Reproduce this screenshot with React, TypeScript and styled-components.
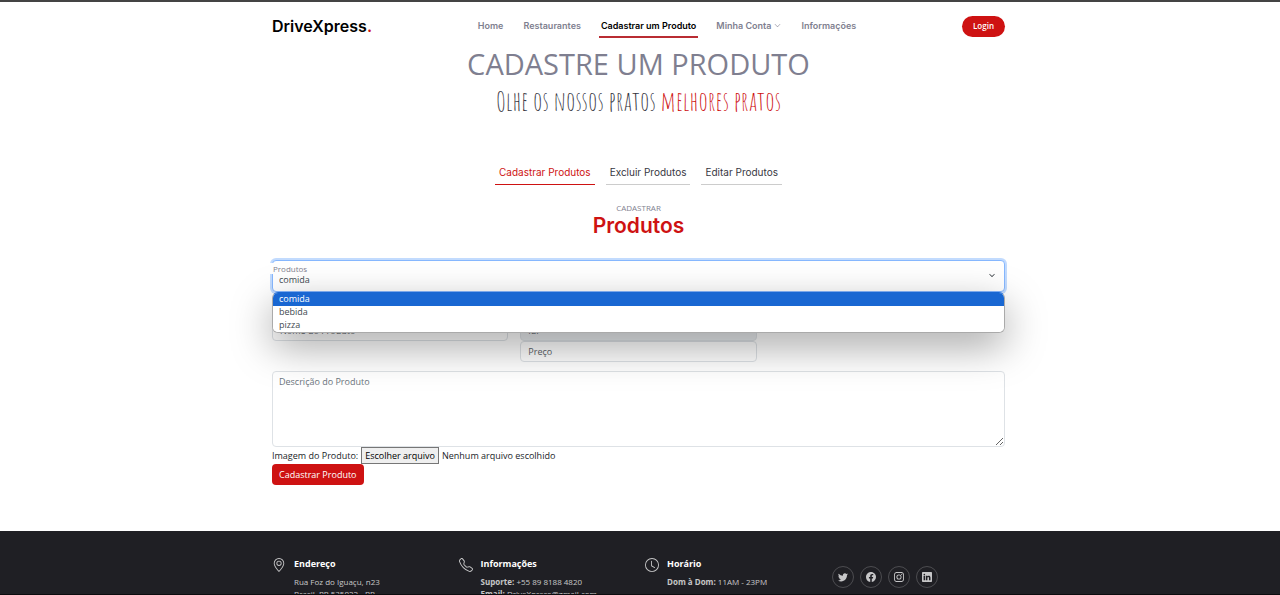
import React from "react";
import styled, { createGlobalStyle } from "styled-components";
import {
  BsChevronDown,
  BsClock,
  BsFacebook,
  BsGeoAlt,
  BsInstagram,
  BsLinkedin,
  BsTelephone,
  BsTwitter,
} from "react-icons/bs";

const RED = "#ce1212";
const GREY = "#7f7f90";

const GlobalStyle = createGlobalStyle`
  *, *::before, *::after { box-sizing: border-box; }
  html { overflow: hidden; }
  body {
    margin: 0;
    background: #fff;
    color: #212529;
    font-family: "Open Sans", sans-serif;
    font-size: 9px;
    line-height: 16px;
  }
  h1, h2, h3, p, ul { margin: 0; padding: 0; font-weight: 400; }
  a { color: inherit; text-decoration: none; }
  input, select, textarea, button { font: inherit; }
`;

const Page = styled.div`
  height: 100vh;
  overflow: hidden;
  border-top: 2px solid #444;
  border-bottom: 1px solid #0c0c0e;
`;

const Container = styled.div`
  width: calc(100% - 24px);
  max-width: 733px;
  margin: 0 auto;
`;

const Content = styled.div`
  padding-right: 3px;
`;

const Header = styled(Container).attrs({ as: "header" })`
  display: flex;
  align-items: center;
  justify-content: space-between;
  height: 48px;
`;

const Logo = styled.a`
  color: #000;
  font: 600 16px/24px Inter, sans-serif;
  span { color: ${RED}; }
`;

const Nav = styled.nav`
  display: flex;
  gap: 16px;
  font: 600 9px/14px Inter, sans-serif;
`;

const NavLink = styled.a<{ $active?: boolean }>`
  display: flex;
  align-items: center;
  gap: 3px;
  padding: 4px 2px 3px;
  color: ${(p) => (p.$active ? "#000" : GREY)};
  border-bottom: 2px solid ${(p) => (p.$active ? "#b92c33" : "transparent")};
  svg { width: 7px; height: 7px; }
`;

const Login = styled.button`
  height: 21px;
  padding: 0 11px;
  border: 0;
  border-radius: 11px;
  background: ${RED};
  color: #fff;
  font: 600 8px/12px "Open Sans", sans-serif;
`;

const Intro = styled.section`
  text-align: center;
`;

const Title = styled.h1`
  color: ${GREY};
  font-size: 29px;
  line-height: 28px;
`;

const Tagline = styled.p`
  padding-top: 4px;
  color: #37373f;
  font-family: "Amatic SC", "Liberation Sans", sans-serif;
  font-size: 27px;
  line-height: 38px;
  span { color: ${RED}; }
`;

const Tabs = styled.div`
  display: flex;
  justify-content: center;
  gap: 11px;
  padding-top: 40px;
`;

const Tab = styled.button<{ $active?: boolean }>`
  height: 25px;
  padding: 0 4px;
  border: 0;
  border-bottom: 1px solid ${(p) => (p.$active ? RED : "#ccc")};
  background: none;
  color: ${(p) => (p.$active ? RED : "#37373f")};
  font: 400 10px/24px Inter, sans-serif;
`;

const SectionHead = styled.header`
  padding: 17px 0 22px;
  text-align: center;
  p { color: ${GREY}; font-size: 8px; line-height: 12px; }
  h2 { color: ${RED}; font: 600 21px/24px Inter, sans-serif; }
`;

const Form = styled.form`
  display: flex;
  flex-direction: column;
`;

const SelectField = styled.div`
  position: relative;
  margin-bottom: 28px;
`;

const SelectLabel = styled.label`
  position: absolute;
  top: 3px;
  left: -2px;
  padding: 0 2px 0 3px;
  background: #fff;
  color: ${GREY};
  font-size: 8px;
  line-height: 11px;
`;

const Select = styled.select`
  display: block;
  width: 100%;
  height: 32px;
  padding: 8px 24px 0 6px;
  border: 1px solid #86b7fe;
  border-radius: 4px;
  outline: 0;
  box-shadow: 0 0 0 2px #c2dbfe;
  appearance: none;
  background: #fff;
  color: #414a51;
`;

const SelectArrow = styled(BsChevronDown)`
  position: absolute;
  top: 12px;
  right: 10px;
  width: 6px;
  height: 7px;
  stroke: #343a40;
  stroke-width: 1;
  pointer-events: none;
`;

const Options = styled.ul`
  position: absolute;
  z-index: 1;
  top: 100%;
  left: 0;
  right: 0;
  overflow: hidden;
  border: 1px solid #aaa;
  border-top-color: #1967d2;
  border-radius: 6px;
  background: #fff;
  list-style: none;
`;

const PopupShadow = styled.div`
  position: absolute;
  z-index: 1;
  top: 100%;
  left: 0;
  right: 0;
  height: 40px;
  border-radius: 6px;
  box-shadow: 0 14px 40px rgba(0, 0, 0, 0.36);
`;

const Option = styled.li<{ $selected?: boolean }>`
  height: 13px;
  padding: 0 6px;
  line-height: 12px;
  background: ${(p) => (p.$selected ? "#1967d2" : "#fff")};
  color: ${(p) => (p.$selected ? "#fff" : "#414a51")};
`;

const Fields = styled.div`
  display: grid;
  grid-template-columns: repeat(3, 1fr);
  gap: 0 12px;
  align-items: start;
  margin-bottom: 9px;
`;

const Input = styled.input`
  display: block;
  width: 100%;
  height: 21px;
  padding: 0 7px;
  border: 1px solid #dee2e6;
  border-radius: 4px;
  background: #fff;
  &::placeholder { color: #5c6369; opacity: 1; }
  &:disabled { background: #e9ecef; }
`;

const TextArea = styled.textarea`
  display: block;
  width: 100%;
  height: 76px;
  padding: 2px 6px;
  border: 1px solid #dee2e6;
  border-radius: 4px;
  background: #fff;
  &::placeholder { color: #6c757d; opacity: 1; }
`;

const FileRow = styled.div`
  display: flex;
  align-items: center;
  gap: 3px;
  height: 17px;
`;

const HiddenFile = styled.input`
  position: absolute;
  width: 1px;
  height: 1px;
  opacity: 0;
`;

const FileButton = styled.label`
  padding: 0 3px;
  border: 1px solid #767676;
  background: #efefef;
  color: #000;
  line-height: 15px;
`;

const Submit = styled.button`
  align-self: flex-start;
  height: 21px;
  padding: 0 7px;
  border: 0;
  border-radius: 4px;
  background: ${RED};
  color: #fff;
`;

const Footer = styled.footer`
  margin-top: 46px;
  padding: 25px 3px 30px 0;
  background: #1f1f24;
  color: rgba(255, 255, 255, 0.75);
  font-size: 8px;
  line-height: 12px;
`;

const FooterGrid = styled(Container)`
  display: grid;
  grid-template-columns: repeat(4, 1fr);
  gap: 13px;
`;

const Info = styled.section`
  display: flex;
  gap: 8px;
  > svg { flex: none; width: 14px; height: 14px; margin-top: 2px; }
  h3 { margin-bottom: 4px; color: #fff; font-size: 9px; font-weight: 700; line-height: 16px; }
  p { white-space: nowrap; }
`;

const Socials = styled.div`
  display: flex;
  gap: 6px;
  padding-top: 10px;
`;

const Social = styled.a`
  display: flex;
  align-items: center;
  justify-content: center;
  width: 22px;
  height: 22px;
  border: 1px solid rgba(255, 255, 255, 0.2);
  border-radius: 50%;
  svg { width: 10px; height: 10px; }
`;

export default function App() {
  return (
    <Page>
      <GlobalStyle />
      <Content>
        <Header>
          <Logo href="#">DriveXpress<span>.</span></Logo>
          <Nav>
            <NavLink href="#">Home</NavLink>
            <NavLink href="#">Restaurantes</NavLink>
            <NavLink href="#" $active>Cadastrar um Produto</NavLink>
            <NavLink href="#">Minha Conta <BsChevronDown /></NavLink>
            <NavLink href="#">Informações</NavLink>
          </Nav>
          <Login type="button">Login</Login>
        </Header>
        <Container as="main">
          <Intro>
            <Title>CADASTRE UM PRODUTO</Title>
            <Tagline>Olhe os nossos pratos <span>melhores pratos</span></Tagline>
          </Intro>
          <Tabs>
            <Tab type="button" $active>Cadastrar Produtos</Tab>
            <Tab type="button">Excluir Produtos</Tab>
            <Tab type="button">Editar Produtos</Tab>
          </Tabs>
          <SectionHead>
            <p>CADASTRAR</p>
            <h2>Produtos</h2>
          </SectionHead>
          <Form>
            <SelectField>
              <Select id="tipo" defaultValue="comida">
                <option>comida</option>
                <option>bebida</option>
                <option>pizza</option>
              </Select>
              <SelectLabel htmlFor="tipo">Produtos</SelectLabel>
              <SelectArrow />
              <PopupShadow />
              <Options>
                <Option $selected>comida</Option>
                <Option>bebida</Option>
                <Option>pizza</Option>
              </Options>
            </SelectField>
            <Fields>
              <Input aria-label="Nome do Produto" placeholder="Nome do Produto" />
              <div>
                <Input aria-label="Id" placeholder="Id:" disabled />
                <Input aria-label="Preço" placeholder="Preço" />
              </div>
            </Fields>
            <TextArea aria-label="Descrição do Produto" placeholder="Descrição do Produto" />
            <FileRow>
              <span>Imagem do Produto:</span>
              <HiddenFile id="imagem" type="file" />
              <FileButton htmlFor="imagem">Escolher arquivo</FileButton>
              <span>Nenhum arquivo escolhido</span>
            </FileRow>
            <Submit type="button">Cadastrar Produto</Submit>
          </Form>
        </Container>
      </Content>
      <Footer>
        <FooterGrid>
          <Info>
            <BsGeoAlt />
            <div>
              <h3>Endereço</h3>
              <p>Rua Foz do Iguaçu, n23</p>
              <p>Brasil, PR 535022 - BR</p>
            </div>
          </Info>
          <Info>
            <BsTelephone />
            <div>
              <h3>Informações</h3>
              <p><b>Suporte:</b> +55 89 8188 4820</p>
              <p><b>Email:</b> DriveXpress@gmail.com</p>
            </div>
          </Info>
          <Info>
            <BsClock />
            <div>
              <h3>Horário</h3>
              <p><b>Dom à Dom:</b> 11AM - 23PM</p>
            </div>
          </Info>
          <Socials>
            <Social href="#" aria-label="Twitter"><BsTwitter /></Social>
            <Social href="#" aria-label="Facebook"><BsFacebook /></Social>
            <Social href="#" aria-label="Instagram"><BsInstagram /></Social>
            <Social href="#" aria-label="LinkedIn"><BsLinkedin /></Social>
          </Socials>
        </FooterGrid>
      </Footer>
    </Page>
  );
}
